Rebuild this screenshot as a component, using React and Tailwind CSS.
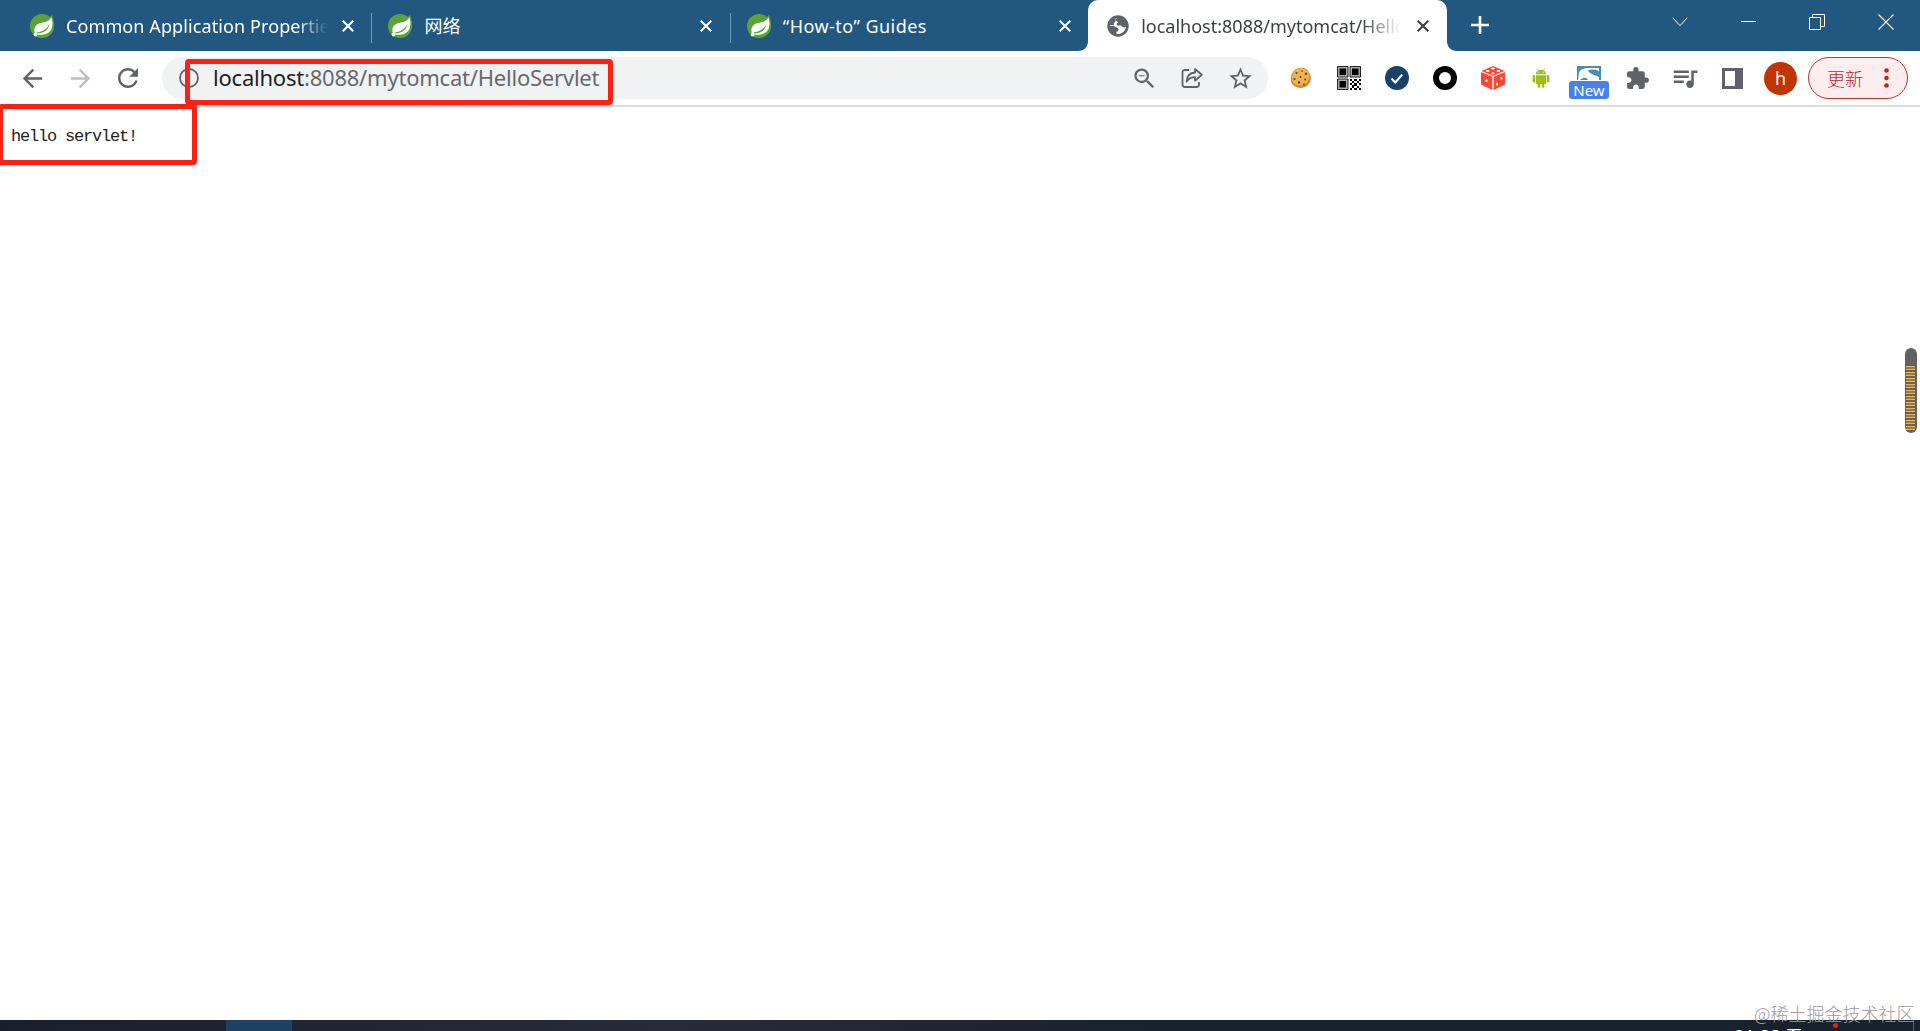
import React from 'react';
import { MdArrowBack, MdArrowForward, MdExtension, MdQueueMusic, MdRefresh, MdStarOutline, MdZoomOut } from 'react-icons/md';
import clsx from 'clsx';

const CloseIcon = ({ className }) => (
    <svg viewBox="0 0 12 12" className={clsx('w-3 h-3 shrink-0', className)} stroke="currentColor" strokeWidth="2" fill="none">
        <path d="M0.7 0.7 11.3 11.3M11.3 0.7 0.7 11.3" />
    </svg>
);

const SpringIcon = () => (
    <svg viewBox="0 0 24 24" className="w-6 h-6 shrink-0">
        <circle cx="12" cy="12" r="12" fill="#5ba335" />
        <path d="M19 4 22 .8c.8 2.5 1.7 6 1.9 9.5L20 12Z" fill="#5ba335" />
        <path d="M21.5 3.3c.9 3.5 1.8 8.5-.3 12.2-2.5 4.7-8 5.500-12 5.200-2.200-.1-3.700-.5-4.400-2C3.600 15.500 4.700 11.500 8.500 9.700c3.700-1.700 9.500-.3 13-6.400Z" fill="white" />
        <path d="M6.5 18.6c5-.6 9.8-2.6 13-8.6-1.2 6-5.5 9.5-13 9.5Z" fill="#5ba335" />
        <circle cx="5.5" cy="20.5" r="1.9" fill="white" />
    </svg>
);

const GlobeIcon = () => (
    <svg viewBox="0 0 22 22" className="w-[22px] h-[22px] shrink-0">
        <circle cx="11" cy="11" r="10.7" fill="#5f6368" />
        <path d="M10.8 3c-1.800.5-2.600 2-1.700 3 .8.7 1.900.2 2.100 1.300.1.800-1.300.8-1.600 1.700-.2.900.6 1.400 1.600 1.400h2.600c1.200 0 1.300 1.600 2.500 1.900.9.200 1.800-.1 2.700-.5-.4 3.400-3 6.600-6.800 7.200-1 .1-2 .1-2.800-.1v-2.200c1.300-.1 2.300-.9 2.200-2.100-.1-1.300-1.300-1.700-2.400-2.300-1.300-.8-2.300-1.300-3.700-1.300H2.900C2.900 6.500 6.300 2.900 10.800 3Z" fill="white" />
        <path d="M2.500 10.300c.3-3.800 2.500-6.500 6-7.600l.2 3.600-2 1.900.2 2.100Z" fill="#5f6368" />
    </svg>
);

const Tab = ({ title, fade, className }) => (
    <div className="w-[358.4px] shrink-0 flex items-center pl-[17px]">
        <SpringIcon />
        <div className={clsx('ml-3 w-[262px] overflow-hidden whitespace-nowrap text-lg text-white', fade && 'mask-r-from-88% mask-r-to-100%', className)}>
            {title}
        </div>
        <CloseIcon className="ml-[14px] text-white" />
    </div>
);

const Divider = () => <div className="w-px h-[30px] self-center -mr-px mt-1 bg-[#6d9cc0]" />;

const Corner = ({ flip }) => (
    <svg viewBox="0 0 10 10" className={clsx('absolute bottom-0 w-2.5 h-2.5', flip ? '-right-2.5 -scale-x-100' : '-left-2.5')}>
        <path d="M10 0v10H0C6 10 10 6 10 0Z" fill="white" />
    </svg>
);

const TabStrip = () => (
    <header className="flex h-[51px] bg-[#22577f] pl-[13px]">
        <Tab title="Common Application Properties" fade className="tracking-[0.1px]" />
        <Divider />
        <Tab title="网络" />
        <Divider />
        <Tab title="“How-to” Guides" className="tracking-[0.45px]" />
        <div className="relative w-[359px] shrink-0 flex items-center bg-white rounded-t-[10px] pl-[19px]">
            <Corner />
            <GlobeIcon />
            <div className="ml-3 w-[260px] overflow-hidden whitespace-nowrap text-lg text-[#3c4043] mask-r-from-85% mask-r-to-100%">
                localhost:8088/mytomcat/HelloServlet
            </div>
            <CloseIcon className="ml-4 text-[#3c4043]" />
            <Corner flip />
        </div>
        <svg viewBox="0 0 18 18" className="w-[18px] h-[18px] ml-6 mt-4" stroke="white" strokeWidth="2.6">
            <path d="M9 0v18M0 9h18" />
        </svg>
        <div className="ml-auto flex h-[43px] items-center gap-[53px] pr-[26px] text-white">
            <svg viewBox="0 0 16 10" className="w-4 h-2.5" fill="none" stroke="currentColor" strokeWidth="1">
                <path d="m.7.7 7.3 8 7.3-8" />
            </svg>
            <div className="w-[15px] h-px bg-white" />
            <svg viewBox="0 0 16 16" className="w-4 h-4" fill="none" stroke="currentColor" strokeWidth="1">
                <path d="M.5 3.5h11v12H.5ZM3.5 3.5v-3h12v12h-4" />
            </svg>
            <svg viewBox="0 0 16 16" className="w-4 h-4" fill="none" stroke="currentColor" strokeWidth="1.1">
                <path d="m.5.5 15 15m0-15-15 15" />
            </svg>
        </div>
    </header>
);

const Slot = ({ children }) => <div className="w-12 shrink-0 flex items-center justify-center">{children}</div>;

const ShareIcon = () => (
    <svg viewBox="0 0 22 22" className="w-[22px] h-[22px]" fill="none" stroke="currentColor" strokeWidth="1.8" strokeLinejoin="round">
        <path d="M8 3H4a2.5 2.5 0 0 0-2.5 2.5v12A2.5 2.5 0 0 0 4 20h11.5a2.5 2.5 0 0 0 2.5-2.5V15" />
        <path d="M14 2v3.5c-5 .3-8 3-8.3 9 2-3.2 4.5-4.3 8.3-4.3v3.5L20.8 7.8Z" />
    </svg>
);

const CookieIcon = () => (
    <svg viewBox="0 0 22 22" className="w-[22px] h-[22px]">
        <path d="M11 .8c3 0 4.5.8 6.5 2.2 1 1.8 3.5 4 3.3 7.5.3 4-1 6-3.6 8.3-3 2-6 2.5-9.2 1.8C4.5 20 2 17.5 1 14.5.2 12 1.5 9 1.5 7.5 3.5 4 6.5.7 11 .8Z" fill="#d18a2e" />
        <path d="M10.5 1.3c3.5-.2 8 2 8.8 6.2.5 5-2.3 9.5-6.8 10.8-4 1-8.5-.5-10-4.3C.8 9 4.5 1.5 10.5 1.3Z" fill="#edb450" />
        <g fill="#6b4218">
            <circle cx="6.5" cy="6" r="1.1" /><circle cx="12" cy="4.3" r=".8" /><circle cx="16" cy="6.7" r="1.2" />
            <circle cx="10.5" cy="10" r="1" /><circle cx="4.5" cy="12" r="1.1" /><circle cx="15.2" cy="12.5" r="1.1" />
            <circle cx="9" cy="15.5" r="1.2" /><circle cx="14" cy="17.5" r=".9" />
        </g>
    </svg>
);

const QrIcon = () => (
    <svg viewBox="0 0 24 24" className="w-6 h-6">
        <g fill="#aaa" stroke="#222" strokeWidth="1">
            <path d="M.5.5h10.5v10.5H.5ZM13 .5h10.5v10.5H13ZM.5 13h10.5v10.5H.5Z" />
        </g>
        <path d="M2.5 2.5H9V9H2.5ZM15 2.5h6.5V9H15ZM2.5 15H9v6.5H2.5Z" fill="black" />
        <path d="M13 13h2v2h-2ZM17 13h3v2h-3ZM22 13h2v2h-2ZM15 15h2v2h-2ZM20 15h2v2h-2ZM13 17h2v2h-2ZM17 17h3v3h-3ZM22 17h2v2h-2ZM15 19h2v3h-2ZM20 20h2v2h-2ZM13 22h2v2h-2ZM17 22h3v2h-3ZM22 22h2v2h-2Z" fill="black" />
    </svg>
);

const CheckIcon = () => (
    <svg viewBox="0 0 24 24" className="w-6 h-6">
        <circle cx="12" cy="12" r="12" fill="#1a4268" />
        <path d="m6.5 12.5 3.8 4 7-8" fill="none" stroke="white" strokeWidth="1.9" />
    </svg>
);

const DiceIcon = () => (
    <svg viewBox="0 0 24 24" className="w-6 h-6">
        <path d="M12 0 23.5 5 12 9.8.5 5ZM0 6l11.3 4.8V24L0 18.5ZM24 6l-11.3 4.8V24L24 18.5Z" fill="#fb4634" />
        <g fill="white">
            <ellipse cx="12" cy="2.5" rx="1.8" ry=".9" /><ellipse cx="6.7" cy="4.9" rx="1.8" ry=".9" />
            <ellipse cx="12" cy="7.3" rx="1.8" ry=".9" /><ellipse cx="17.3" cy="4.9" rx="1.8" ry=".9" />
            <ellipse cx="5.5" cy="14.5" rx="1.1" ry="1.5" />
            <ellipse cx="16" cy="18" rx="1.1" ry="1.6" /><ellipse cx="20.5" cy="12" rx="1.1" ry="1.6" />
        </g>
    </svg>
);

const AndroidIcon = () => (
    <svg viewBox="0 0 18 20" className="w-[18px] h-5" fill="#9bbf15">
        <path d="M3.8 6.3C3.9 3.5 6 1.7 9 1.7s5.1 1.8 5.2 4.6ZM3.8 7.2h10.4v7.6c0 .8-.5 1.2-1.2 1.2H5c-.8 0-1.2-.5-1.2-1.2Z" />
        <rect x=".6" y="6.9" width="2.5" height="7.5" rx="1.2" />
        <rect x="14.9" y="6.9" width="2.5" height="7.5" rx="1.2" />
        <rect x="5.7" y="13" width="2.5" height="6.7" rx="1.2" />
        <rect x="9.8" y="13" width="2.5" height="6.7" rx="1.2" />
        <path d="m5.3.4 1.3 2M12.7.4l-1.3 2" stroke="#9bbf15" strokeWidth=".6" />
        <circle cx="6.8" cy="4.2" r=".6" fill="white" />
        <circle cx="11.2" cy="4.2" r=".6" fill="white" />
    </svg>
);

const NewBadgeIcon = () => (
    <div className="relative w-6 h-6">
        <svg viewBox="0 0 24 16" className="w-6 h-4">
            <path d="M0 0h24v14H0Z" fill="#468cb8" />
            <path d="M2 6.5C3 3.5 7 2 11 2h11v3.5l-2-1.5c-3-.8-7-.8-9 .5l11 6.5v3H11C9 10 5 12 3 14H1Z" fill="white" />
            <path d="M11 5.2c4-1 8 .7 11 5.3-3-1-7-1.5-11-5.3Z" fill="#468cb8" />
        </svg>
        <div className="absolute -left-2 top-[15px] w-10 h-[18px] rounded-[3px] bg-[#4781ea] text-white text-[15px] leading-[18px] text-center">
            New
        </div>
    </div>
);

const Toolbar = () => (
    <div className="flex items-center h-14 pl-2 border-b-2 border-[#dadcde] text-[#5f6368]">
        <Slot><MdArrowBack size={29} /></Slot>
        <Slot><MdArrowForward size={29} className="text-[#bdbfc1]" /></Slot>
        <Slot><MdRefresh size={30} /></Slot>
        <div className="ml-2.5 w-[1106px] shrink-0 h-[42px] rounded-full bg-[#f0f2f3] flex items-center pl-[17px] pr-1">
            <svg viewBox="0 0 20 20" className="w-5 h-5" fill="none" stroke="currentColor" strokeWidth="1.8">
                <circle cx="10" cy="10" r="9" />
                <path d="M10 9v5M10 5.5v2" />
            </svg>
            <div className="ml-[14px] pb-0.5 text-[22px] leading-none tracking-[-0.22px] whitespace-nowrap text-[#66696d]">
                <span className="text-[#202124]">localhost</span>:8088/mytomcat/HelloServlet
            </div>
            <div className="ml-auto flex">
                <Slot><MdZoomOut size={27} /></Slot>
                <Slot><ShareIcon /></Slot>
                <Slot><MdStarOutline size={27} /></Slot>
            </div>
        </div>
        <div className="ml-[9px] flex items-center">
            <Slot><CookieIcon /></Slot>
            <Slot><QrIcon /></Slot>
            <Slot><CheckIcon /></Slot>
            <Slot><div className="w-6 h-6 rounded-full border-[6px] border-black" /></Slot>
            <Slot><DiceIcon /></Slot>
            <Slot><AndroidIcon /></Slot>
            <Slot><NewBadgeIcon /></Slot>
            <Slot><MdExtension size={25} /></Slot>
            <Slot><MdQueueMusic size={30} /></Slot>
            <Slot><div className="w-[21px] h-[21px] mr-px border-[3px] border-r-[8px] border-[#5f6368]" /></Slot>
            <Slot>
                <div className="w-[33px] h-[33px] mr-px rounded-full bg-[#bf3503] text-white text-lg leading-[32px] text-center">h</div>
            </Slot>
        </div>
        <div className="ml-[3px] w-[100px] h-[42px] shrink-0 rounded-full border border-[#c5302b] bg-[#fceeee] flex items-center pl-[18px] text-[#c5221f]">
            <span className="text-lg leading-none font-light font-['Noto_Sans_CJK_SC',sans-serif]">更新</span>
            <svg viewBox="0 0 5 20" className="w-[5px] h-5 ml-[21px]" fill="currentColor">
                <circle cx="2.5" cy="2.5" r="2.3" /><circle cx="2.5" cy="10" r="2.3" /><circle cx="2.5" cy="17.5" r="2.3" />
            </svg>
        </div>
    </div>
);

const ScrollMeter = () => (
    <div className="absolute left-[1905px] top-[348px] w-3 h-[85px] rounded-md bg-[#626262] pt-[18px] pl-px pr-0.5 overflow-hidden">
        <div className="h-[65px] bg-[repeating-linear-gradient(to_bottom,#d2bd74_0px,#d2bd74_1px,#b9731c_1px,#b9731c_3px,#d2bd74_3px,#d2bd74_4px,#68625a_4px,#68625a_6px)]" />
    </div>
);

const Taskbar = () => (
    <footer className="relative h-[11px] shrink-0 overflow-hidden flex bg-linear-to-r from-[#191f2c] via-[#292c38] via-35% to-[#17222d] to-60%">
        <div className="ml-[226px] w-[66px] bg-[#1d4160]" />
        <div className="w-0.5 bg-[#142c40]" />
        <div className="ml-auto mr-[117px] mt-[7px] text-lg leading-none whitespace-nowrap text-white">21:38 五</div>
        <div className="absolute left-[1833px] top-[3px] w-[5px] h-[5px] rounded-full bg-[#fb1414]" />
        <div className="absolute left-[1913px] top-0 w-px h-[11px] bg-[#59616b]" />
    </footer>
);

const App = () => {
    return (
        <div className="relative flex flex-col w-[1920px] h-[1031px] overflow-hidden bg-white font-['Noto_Sans','Noto_Sans_CJK_SC',sans-serif]">
            <TabStrip />
            <Toolbar />
            <main className="flex-1 pl-[11px] pt-[18px]">
                <pre className="font-['Liberation_Mono',monospace] text-[17px] leading-6 tracking-[-1.2px] text-[#222]">hello servlet!</pre>
            </main>
            <Taskbar />

            {/* Highlight frames */}
            <div className="absolute left-[185px] top-[59px] w-[428px] h-[46px] rounded-[4px] border-[5px] border-[#fb2115]" />
            <div className="absolute -left-0.5 top-[104px] w-[199px] h-[61px] rounded-[4px] border-[5px] border-[#fb2115]" />

            <ScrollMeter />
            <div className="absolute left-[1754px] top-[1000px] text-lg leading-[26px] font-light whitespace-nowrap text-[#9b9b9b] font-['Noto_Sans_CJK_SC',sans-serif]">
                @稀土掘金技术社区
            </div>
        </div>
    );
};

export default App;
